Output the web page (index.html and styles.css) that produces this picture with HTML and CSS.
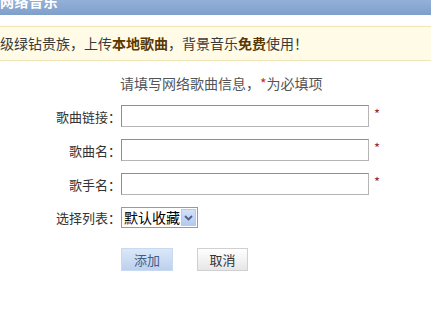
FILE: index.html
```html
<!DOCTYPE html>
<html lang="zh">
<head>
<meta charset="utf-8">
<link rel="stylesheet" href="styles.css">
</head>
<body>
<div class="header"><span class="header-title">网络音乐</span></div>
<div class="notice">级绿钻贵族，上传<b>本地歌曲</b>，背景音乐<b>免费</b>使用！</div>
<div class="title">请填写网络歌曲信息，<span class="req">*</span>为必填项</div>
<div class="form">
  <div class="row">
    <label class="label">歌曲链接：</label>
    <div class="input"></div>
    <span class="star">*</span>
  </div>
  <div class="row">
    <label class="label">歌曲名：</label>
    <div class="input"></div>
    <span class="star">*</span>
  </div>
  <div class="row">
    <label class="label">歌手名：</label>
    <div class="input"></div>
    <span class="star">*</span>
  </div>
  <div class="row row-select">
    <label class="label">选择列表：</label>
    <div class="select">
      <span class="select-text">默认收藏</span>
      <span class="select-btn"><svg width="9" height="6" viewBox="0 0 9 6"><path d="M1 1 L4.5 4.5 L8 1" fill="none" stroke="#4d6185" stroke-width="1.8"/></svg></span>
    </div>
  </div>
  <div class="buttons">
    <span class="btn btn-add">添加</span>
    <span class="btn btn-cancel">取消</span>
  </div>
</div>
</body>
</html>
```
FILE: styles.css
```css
html, body {
  margin: 0;
  padding: 0;
  background: #fff;
}
body {
  width: 431px;
  height: 313px;
  overflow: hidden;
  font-family: "Noto Sans CJK SC", "Liberation Sans", sans-serif;
  color: #333;
}
.header {
  height: 15px;
  overflow: hidden;
  background: linear-gradient(#93b0d8, #7f9fcb);
}
.header-title {
  display: block;
  margin-top: -8px;
  line-height: 18px;
  font-size: 14px;
  font-weight: bold;
  color: #fff;
  letter-spacing: 0.5px;
}
.notice {
  margin-top: 11px;
  height: 33px;
  line-height: 33px;
  background: #fffbe6;
  border-top: 1px solid #efe4b6;
  border-bottom: 1px solid #efe4b6;
  font-size: 14px;
  color: #3a3a3a;
  white-space: nowrap;
}
.notice b {
  color: #5a3800;
}
.title {
  margin-top: 12px;
  padding-left: 120px;
  height: 20px;
  line-height: 20px;
  font-size: 14px;
  color: #555;
}
.req {
  color: #c03030;
}
.form {
  margin-top: 12px;
  display: flex;
  flex-direction: column;
  gap: 12px;
}
.row {
  display: flex;
  align-items: center;
  height: 22px;
}
.label {
  width: 121px;
  text-align: right;
  font-size: 13px;
  color: #333;
  white-space: nowrap;
}
.input {
  box-sizing: border-box;
  width: 248px;
  height: 22px;
  border: 1px solid #8f8f8f;
  border-right-color: #b5b5b5;
  border-bottom-color: #b5b5b5;
  background: #fff;
}
.star {
  margin-left: 5px;
  margin-top: -6px;
  font-size: 13px;
  color: #a32a2a;
}
.row-select {
  height: 21px;
}
.select {
  box-sizing: border-box;
  width: 77px;
  height: 21px;
  border: 1px solid #8a9bb5;
  display: flex;
  align-items: center;
  justify-content: space-between;
  padding: 1px;
  background: #fff;
}
.select-text {
  font-size: 14px;
  color: #000;
  line-height: 17px;
  padding-left: 1px;
}
.select-btn {
  width: 15px;
  height: 17px;
  box-sizing: border-box;
  background: linear-gradient(#d3e0fb, #b4c8f0);
  border: 1px solid #b7c9ef;
  display: flex;
  align-items: center;
  justify-content: center;
}
.buttons {
  margin-top: 8px;
  padding-left: 121px;
  display: flex;
  gap: 24px;
}
.btn {
  box-sizing: border-box;
  height: 23px;
  line-height: 21px;
  text-align: center;
  font-size: 13px;
}
.btn-add {
  width: 52px;
  background: linear-gradient(#dbe7f7, #bcd1ee);
  border: 1px solid #c9d9ef;
  color: #3f5e8a;
}
.btn-cancel {
  width: 51px;
  background: linear-gradient(#ffffff, #e6e6e6);
  border: 1px solid #d0d0d0;
  color: #333;
}
```
